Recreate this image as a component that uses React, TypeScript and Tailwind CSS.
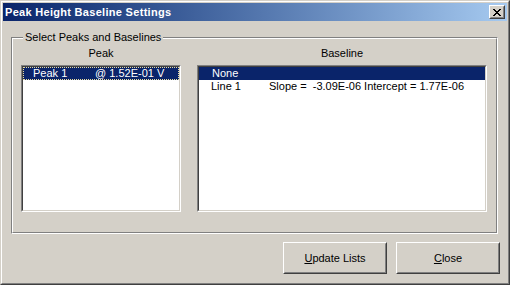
import React from "react";

function Raised({ className = "", children }: { className?: string; children?: React.ReactNode }) {
  return (
    <div className={`border border-t-white border-l-white border-r-[#404040] border-b-[#404040] ${className}`}>
      <div className="w-full h-full border border-t-[#d4d0c8] border-l-[#d4d0c8] border-r-[#808080] border-b-[#808080] bg-[#d4d0c8] flex items-center justify-center">
        {children}
      </div>
    </div>
  );
}

function Sunken({ className = "", children }: { className?: string; children?: React.ReactNode }) {
  return (
    <div className={`border border-t-[#808080] border-l-[#808080] border-r-white border-b-white ${className}`}>
      <div className="w-full h-full border border-t-[#404040] border-l-[#404040] border-r-[#d4d0c8] border-b-[#d4d0c8] bg-white">
        {children}
      </div>
    </div>
  );
}

export default function App() {
  return (
    <div className="w-[510px] h-[285px] bg-[#d4d0c8] border border-t-[#d4d0c8] border-l-[#d4d0c8] border-r-[#404040] border-b-[#404040] font-['Liberation_Sans',Arial,sans-serif] text-[11px] leading-[13px] text-black">
      <div className="w-full h-full border border-t-white border-l-white border-r-[#808080] border-b-[#808080] p-px flex flex-col">
        {/* Title bar */}
        <div className="h-[18px] shrink-0 flex items-center justify-between pl-[2px] pr-[2px] bg-gradient-to-r from-[#0a246a] to-[#a6caf0]">
          <span className="font-bold text-white tracking-[0.3px] leading-[14px]">Peak Height Baseline Settings</span>
          <Raised className="w-4 h-[14px]">
            <svg width="8" height="7" viewBox="0 0 8 7" shapeRendering="crispEdges">
              <path d="M0 0h2v1h-2zM6 0h2v1h-2zM1 1h2v1h-2zM5 1h2v1h-2zM2 2h4v1h-4zM3 3h2v1h-2zM2 4h4v1h-4zM1 5h2v1h-2zM5 5h2v1h-2zM0 6h2v1h-2zM6 6h2v1h-2z" fill="#000" />
            </svg>
          </Raised>
        </div>

        {/* Content */}
        <div className="flex-1 flex flex-col pl-[8px] pt-[16px]">
          {/* Group box */}
          <div className="relative w-[487px] h-[197px] border border-t-[#808080] border-l-[#808080] border-r-white border-b-white">
            <div className="w-full h-full border border-t-white border-l-white border-r-[#808080] border-b-[#808080] flex pl-[8px] pt-[8px] gap-[16px]">
              <div className="flex flex-col w-[160px]">
                <div className="text-center h-[13px]">Peak</div>
                <Sunken className="mt-[5px] h-[147px]">
                  <div className="h-[13px] bg-[#0a246a] text-white border border-dotted border-[#e8dca0] flex items-center">
                    <span className="pl-[9px] w-[71px]">Peak 1</span>
                    <span>@ 1.52E-01 V</span>
                  </div>
                </Sunken>
              </div>
              <div className="flex flex-col w-[290px]">
                <div className="text-center h-[13px]">Baseline</div>
                <Sunken className="mt-[5px] h-[147px]">
                  <div className="h-[13px] bg-[#0a246a] text-white flex items-center">
                    <span className="pl-[13px]">None</span>
                  </div>
                  <div className="h-[13px] flex items-center">
                    <span className="pl-[12px] w-[70px]">Line 1</span>
                    <span className="whitespace-pre">Slope =  -3.09E-06 Intercept = 1.77E-06</span>
                  </div>
                </Sunken>
              </div>
            </div>
            <div className="absolute left-[11px] top-[-7px] px-[2px] bg-[#d4d0c8] leading-[13px]">Select Peaks and Baselines</div>
          </div>

          {/* Buttons */}
          <div className="flex justify-end gap-[9px] mt-[8px] pr-[7px]">
            <Raised className="w-[104px] h-[32px]">
              <span><span className="underline">U</span>pdate Lists</span>
            </Raised>
            <Raised className="w-[104px] h-[32px]">
              <span><span className="underline">C</span>lose</span>
            </Raised>
          </div>
        </div>
      </div>
    </div>
  );
}
